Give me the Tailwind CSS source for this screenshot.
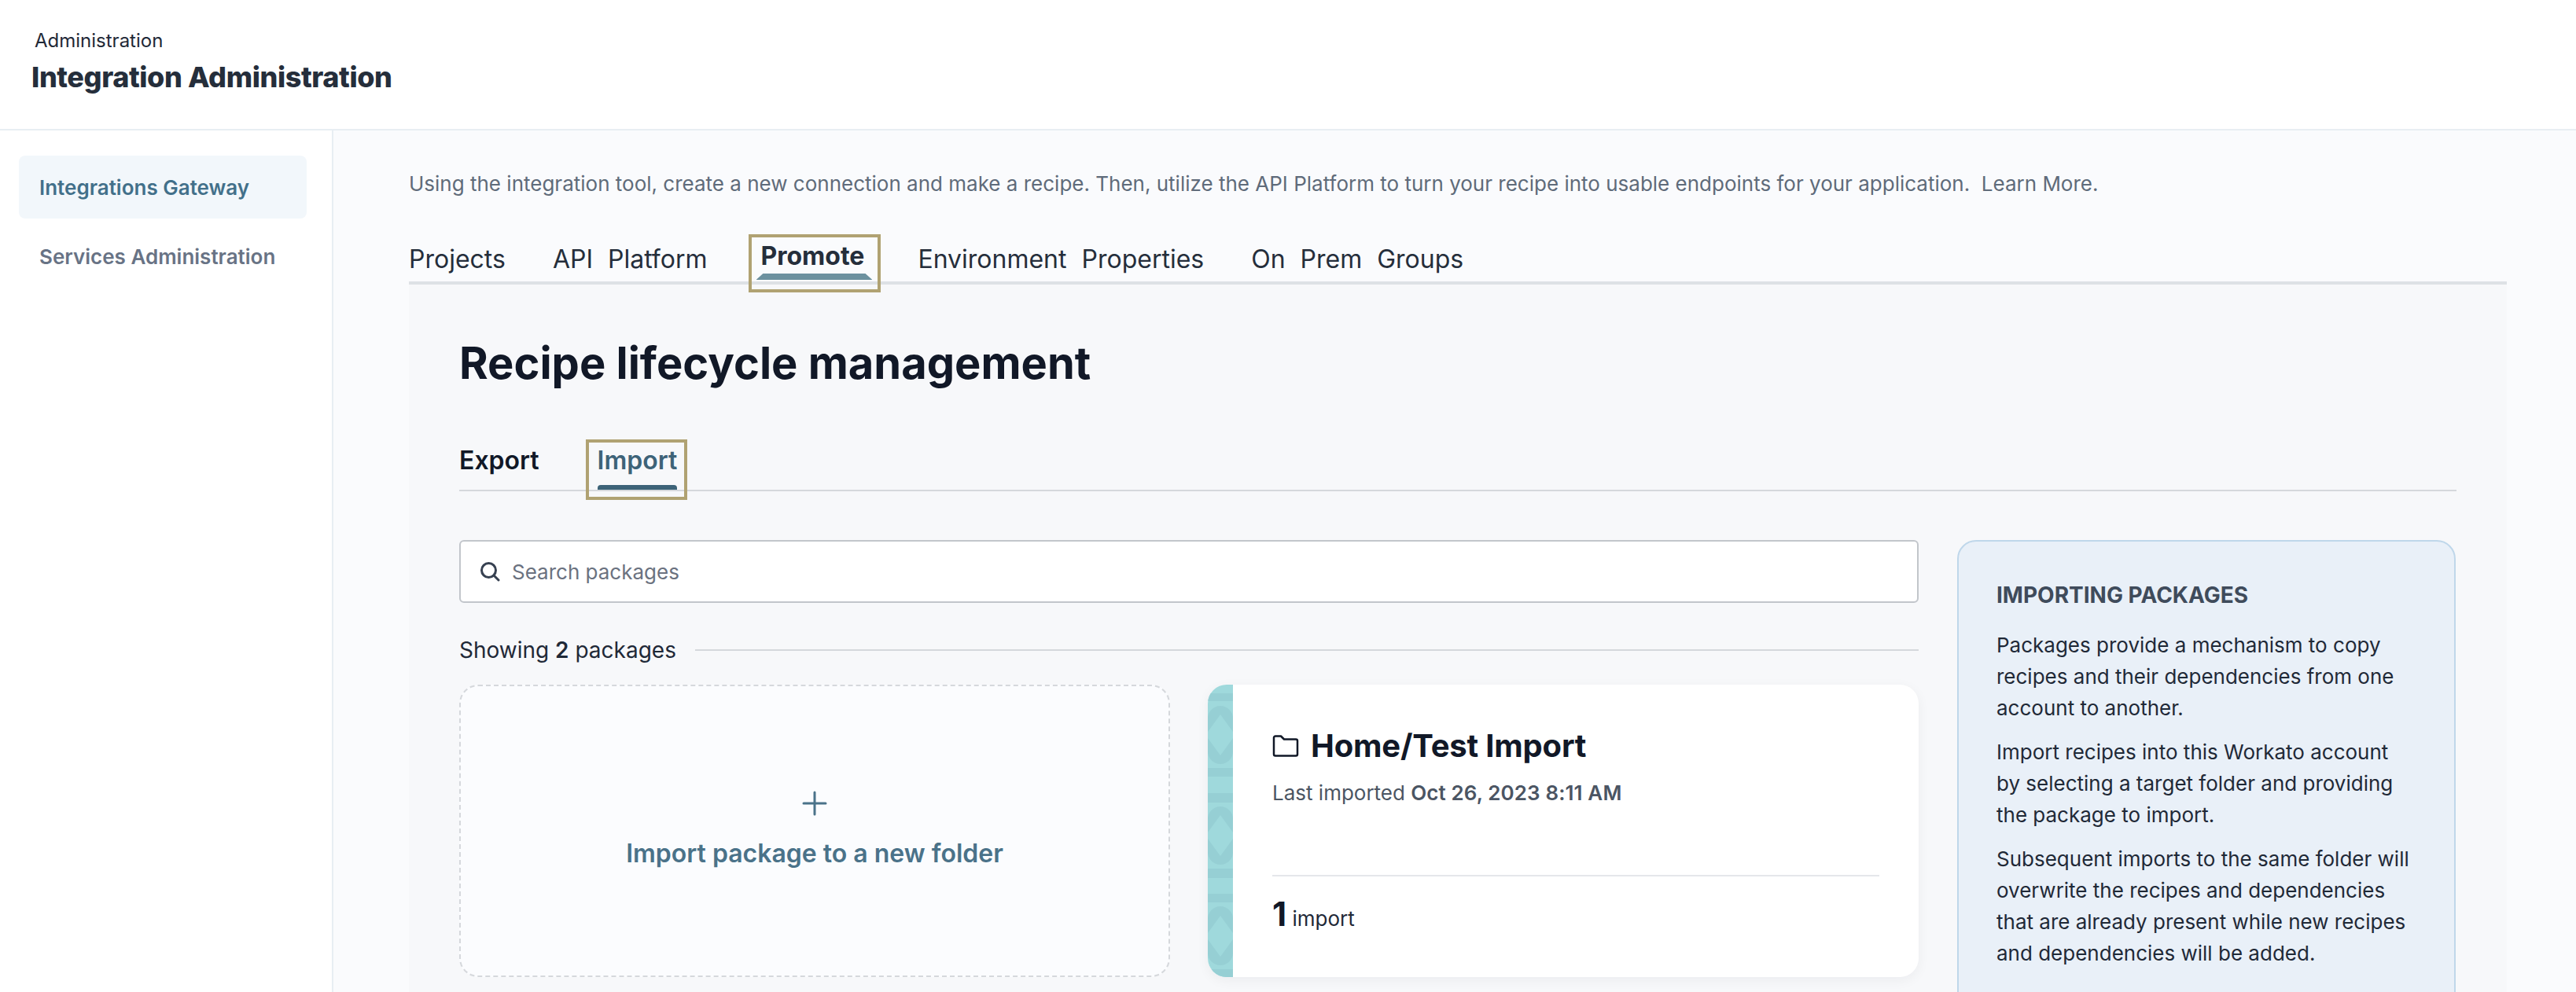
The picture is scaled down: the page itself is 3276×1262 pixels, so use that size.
<!DOCTYPE html>
<html lang="en">
<head>
<meta charset="UTF-8" />
<title>Integration Administration</title>
<script src="https://cdn.jsdelivr.net/npm/@tailwindcss/browser@4"></script>
</head>
<body class="h-[1262px] overflow-hidden bg-white font-['Inter',sans-serif] text-[#111827]">
  <!-- Header -->
  <header class="h-[166px] border-b-2 border-[#e8eef3] pl-[40px] pt-[36px]">
    <p class="pl-[4px] text-[24px] leading-[32px] text-[#1f2937]">Administration</p>
    <h1 class="mt-[10px] text-[36px] leading-[40px] font-extrabold tracking-[-0.4px] text-[#252e3b]">Integration Administration</h1>
  </header>

  <div class="flex h-[1096px]">
    <!-- Sidebar -->
    <aside class="w-[424px] shrink-0 border-r-2 border-[#e8eef3] px-[24px] pt-[32px]">
      <a class="flex h-[80px] w-[366px] items-center rounded-[8px] bg-[#f2f7fb] pl-[26px] text-[26px] font-semibold text-[#42708a]">Integrations Gateway</a>
      <a class="mt-[8px] flex h-[80px] items-center pl-[26px] text-[26px] font-semibold text-[#687385]">Services Administration</a>
    </aside>

    <!-- Main -->
    <main class="flex-1 overflow-hidden bg-[#fafbfd] pl-[96px] pr-[88px] pt-[48px]">
      <p class="text-[26px] leading-[40px] whitespace-pre text-[#5f6b7a]">Using the integration tool, create a new connection and make a recipe. Then, utilize the API Platform to turn your recipe into usable endpoints for your application.  Learn More.</p>

      <nav class="mt-[52px] flex h-[56px] gap-[60px] border-b-4 border-[#dde1e5] text-[32px] leading-[48px] text-[#252e3b] [word-spacing:10px]">
        <a>Projects</a>
        <a>API Platform</a>
        <a class="relative mx-[8px] -mt-[4px] font-bold">Promote
          <span class="absolute -left-[6px] -right-[10px] top-[46px] h-[8px] bg-[#6c919f] [clip-path:polygon(6%_0,94%_0,100%_100%,0_100%)]"></span>
          <span class="absolute -left-[16px] -right-[21px] -top-[4px] h-[74px] border-4 border-[#b0a272]"></span>
        </a>
        <a>Environment Properties</a>
        <a>On Prem Groups</a>
      </nav>

      <section class="h-[900px] overflow-hidden bg-[#f7f8fa] px-[64px] pt-[64px]">
        <h2 class="text-[56px] leading-[72px] font-bold text-[#111827]">Recipe lifecycle management</h2>

        <div class="mt-[68px] flex h-[59px] gap-[74px] border-b-2 border-[#d5d8dc] text-[32px] leading-[40px] font-semibold">
          <a>Export</a>
          <a class="relative text-[#3d6378]">Import
            <span class="absolute inset-x-0 top-[51px] h-[6px] rounded-t-[4px] bg-[#3d6378]"></span>
            <span class="absolute -left-[15px] -right-[13px] -top-[7px] h-[77px] border-4 border-[#b0a272]"></span>
          </a>
        </div>

        <div class="mt-[62px] grid grid-cols-[1856px_634px] gap-[49px]">
          <div>
            <div class="flex h-[80px] items-center gap-[15px] rounded-[6px] border-2 border-[#c2c6cb] bg-white pl-[24px]">
              <svg class="h-[26px] w-[26px]" viewBox="0 0 26 26" fill="none" stroke="#374151" stroke-width="3" stroke-linecap="round"><circle cx="11.5" cy="11.5" r="9"/><path d="M18 18l6 6"/></svg>
              <span class="text-[26px] text-[#6b7280]">Search packages</span>
            </div>

            <div class="mt-[40px] flex items-center gap-[24px]">
              <p class="text-[28px] leading-[40px] text-[#1f2937]">Showing <b class="font-semibold">2</b> packages</p>
              <div class="h-[2px] flex-1 bg-[#d5d8dc]"></div>
            </div>

            <div class="mt-[24px] grid grid-cols-2 gap-[48px]">
              <div class="flex h-[372px] flex-col items-center justify-center rounded-[24px] border-2 border-dashed border-[#d5d8dc] bg-[#fbfcfe] pb-[2px] text-[#4a7289]">
                <svg class="h-[32px] w-[32px]" viewBox="0 0 32 32" fill="none" stroke="#4a7289" stroke-width="3" stroke-linecap="round"><path d="M16 2v28M2 16h28"/></svg>
                <p class="mt-[28px] text-[32px] leading-[40px] font-semibold">Import package to a new folder</p>
              </div>

              <div class="flex h-[372px] overflow-hidden rounded-[24px] bg-white shadow-[0_4px_16px_rgba(17,24,39,0.05)]">
                <svg class="h-[372px] w-[32px] shrink-0" viewBox="0 0 32 372">
                  <rect width="32" height="372" fill="#9fd9dc"/>
                  <g fill="#96cfd4">
                    <rect y="11" width="32" height="10"/><rect y="106" width="32" height="11"/>
                    <rect y="138" width="32" height="12"/><rect y="234" width="32" height="12"/>
                    <rect y="266" width="32" height="11"/><rect y="362" width="32" height="10"/>
                    <rect y="27" width="32" height="74" rx="16"/><rect y="155" width="32" height="74" rx="16"/><rect y="282" width="32" height="75" rx="16"/>
                  </g>
                  <g fill="#9fd9dc">
                    <path d="M16 38 32 60V68L16 90 0 68V60Z"/><path d="M16 166 32 188V196L16 218 0 196V188Z"/><path d="M16 294 32 316V324L16 346 0 324V316Z"/>
                  </g>
                </svg>
                <div class="flex-1 px-[50px] pt-[54px]">
                  <div class="flex items-center gap-[15px]">
                    <svg class="h-[28px] w-[34px]" viewBox="0 0 34 28" fill="none" stroke="#111827" stroke-width="2.5" stroke-linejoin="round"><path d="M2 3.5a2 2 0 0 1 2-2h7l4 4h15a2 2 0 0 1 2 2v17a2 2 0 0 1-2 2H4a2 2 0 0 1-2-2z"/></svg>
                    <h3 class="text-[40px] leading-[48px] font-bold tracking-[-0.2px]">Home/Test Import</h3>
                  </div>
                  <p class="mt-[16px] text-[26px] leading-[40px] text-[#4b5563]">Last imported <b class="font-semibold tracking-[0.1px]">Oct 26, 2023 8:11 AM</b></p>
                  <div class="mt-[84px] h-[2px] bg-[#e5e7eb]"></div>
                  <p class="mt-[24px] text-[26px] leading-[48px] text-[#1f2937]"><b class="text-[42px] font-bold text-[#111827]">1</b> import</p>
                </div>
              </div>
            </div>
          </div>

          <aside class="h-[600px] rounded-[24px] border-2 border-[#bfd7ea] bg-[#e9f0f8] px-[48px] pt-[48px] text-[26px] leading-[40px] text-[#1f2937]">
            <h4 class="text-[28px] font-bold text-[#3f4b5b]">IMPORTING PACKAGES</h4>
            <p class="mt-[24px]">Packages provide a mechanism to copy recipes and their dependencies from one account to another.</p>
            <p class="mt-[16px]">Import recipes into this Workato account by selecting a target folder and providing the package to import.</p>
            <p class="mt-[16px]">Subsequent imports to the same folder will overwrite the recipes and dependencies that are already present while new recipes and dependencies will be added.</p>
          </aside>
        </div>
      </section>
    </main>
  </div>
</body>
</html>
